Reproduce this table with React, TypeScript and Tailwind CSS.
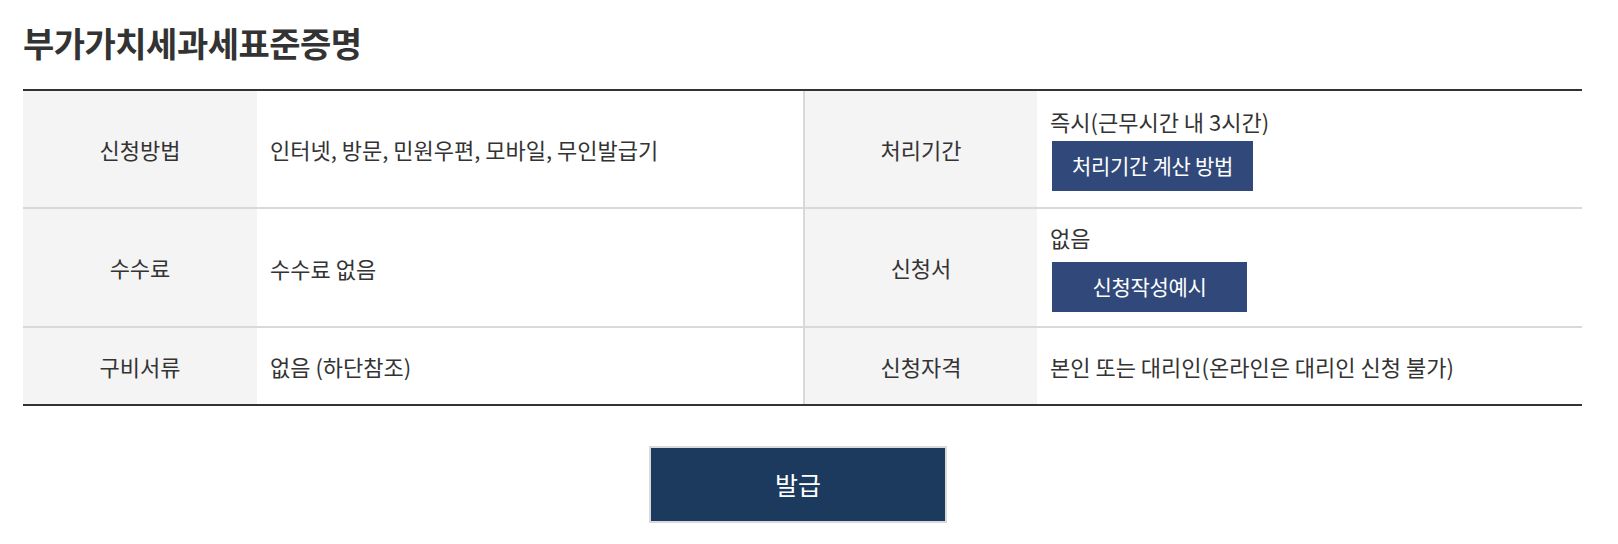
import React from "react";

const font = { fontFamily: '"Noto Sans CJK KR", "Noto Sans", sans-serif' };

function Th({ children, left }: { children: React.ReactNode; left?: boolean }) {
  return (
    <div
      className={`flex items-center justify-center bg-[#f4f4f4] text-[22px] text-[#333] ${
        left ? "border-l-2 border-[#d9d9d9]" : ""
      }`}
    >
      {children}
    </div>
  );
}

function Td({ children }: { children: React.ReactNode }) {
  return (
    <div className="flex flex-col justify-center pl-[13px] pr-4 text-[22px] text-[#333]">
      {children}
    </div>
  );
}

function Btn({ children, w }: { children: React.ReactNode; w: string }) {
  return (
    <div
      className={`${w} ml-[2px] flex h-[50px] items-center justify-center bg-[#30497a] text-[21px] text-white tracking-[-0.3px]`}
    >
      {children}
    </div>
  );
}

export default function App() {
  return (
    <div className="min-h-[544px] bg-white pl-[23px]" style={font}>
      <div className="w-[1559px]">
        <h1 className="pt-[22px] pb-[25px] text-[34px] font-bold leading-[42px] tracking-[-0.5px] text-[#333]">
          부가가치세과세표준증명
        </h1>
        <div className="border-y-2 border-[#333]">
          <div className="grid h-[116px] grid-cols-[234px_546px_234px_545px]">
            <Th>신청방법</Th>
            <Td>
              <span className="leading-[26px]">인터넷, 방문, 민원우편, 모바일, 무인발급기</span>
            </Td>
            <Th left>처리기간</Th>
            <Td>
              <span className="leading-[26px]">즉시(근무시간 내 3시간)</span>
              <div className="mt-[7px]">
                <Btn w="w-[201px]">처리기간 계산 방법</Btn>
              </div>
            </Td>
          </div>
          <div className="grid h-[119px] grid-cols-[234px_546px_234px_545px] border-t-2 border-[#d9d9d9]">
            <Th>수수료</Th>
            <Td>
              <span className="leading-[26px]">수수료 없음</span>
            </Td>
            <Th left>신청서</Th>
            <Td>
              <span className="leading-[26px]">없음</span>
              <div className="mt-[12px]">
                <Btn w="w-[195px]">신청작성예시</Btn>
              </div>
            </Td>
          </div>
          <div className="grid h-[78px] grid-cols-[234px_546px_234px_545px] border-t-2 border-[#d9d9d9]">
            <Th>구비서류</Th>
            <Td>
              <span className="leading-[26px]">없음 (하단참조)</span>
            </Td>
            <Th left>신청자격</Th>
            <Td>
              <span className="leading-[26px]">본인 또는 대리인(온라인은 대리인 신청 불가)</span>
            </Td>
          </div>
        </div>
        <div className="flex justify-center pt-[40px]">
          <button className="mr-[9px] flex h-[77px] w-[298px] items-center justify-center border-2 border-[#d9d9d9] bg-[#1c3a5e] text-[25px] text-white">
            발급
          </button>
        </div>
      </div>
    </div>
  );
}
